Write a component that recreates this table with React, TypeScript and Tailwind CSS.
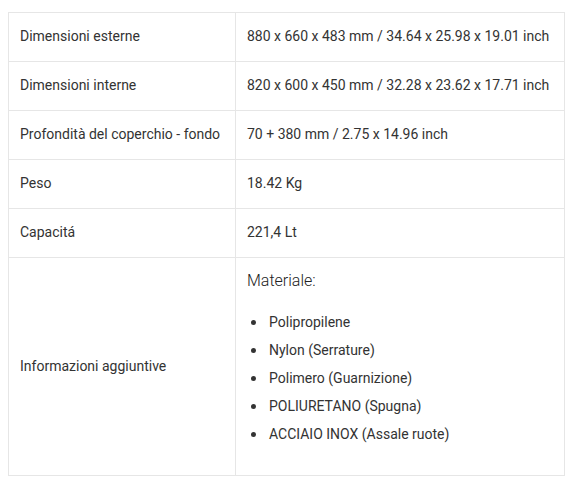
const rows: [string, string][] = [
  ["Dimensioni esterne", "880 x 660 x 483 mm / 34.64 x 25.98 x 19.01 inch"],
  ["Dimensioni interne", "820 x 600 x 450 mm / 32.28 x 23.62 x 17.71 inch"],
  ["Profondità del coperchio - fondo", "70 + 380 mm / 2.75 x 14.96 inch"],
  ["Peso", "18.42 Kg"],
  ["Capacitá", "221,4 Lt"],
];

const materials = [
  "Polipropilene",
  "Nylon (Serrature)",
  "Polimero (Guarnizione)",
  "POLIURETANO (Spugna)",
  "ACCIAIO INOX (Assale ruote)",
];

export default function App() {
  return (
    <div
      className="bg-white w-[577px] h-[485px] pt-[12px] pl-[8px] text-[#333] text-[14px]"
      style={{ fontFamily: "Roboto, 'Liberation Sans', sans-serif" }}
    >
      <table className="w-[557px] border-collapse table-fixed">
        <colgroup>
          <col className="w-[227px]" />
          <col />
        </colgroup>
        <tbody>
          {rows.map(([label, value]) => (
            <tr key={label} className="h-[49px]">
              <td className="border border-[#e6e6e6] px-[11px] pt-0 pb-[2px] align-middle">
                {label}
              </td>
              <td className="border border-[#e6e6e6] px-[11px] pt-0 pb-[2px] align-middle whitespace-nowrap">
                {value}
              </td>
            </tr>
          ))}
          <tr>
            <td className="border border-[#e6e6e6] px-[11px] align-middle">
              Informazioni aggiuntive
            </td>
            <td className="border border-[#e6e6e6] px-[11px] pt-[11px] pb-[27px] align-top">
              <p className="text-[16px] font-light text-[#222] leading-[24px]">Materiale:</p>
              <ul className="mt-[15px]">
                {materials.map((m) => (
                  <li key={m} className="flex items-center h-[28px]">
                    <span className="ml-[4px] mr-[13px] w-[5px] h-[5px] rounded-full bg-[#333]" />
                    {m}
                  </li>
                ))}
              </ul>
            </td>
          </tr>
        </tbody>
      </table>
    </div>
  );
}
